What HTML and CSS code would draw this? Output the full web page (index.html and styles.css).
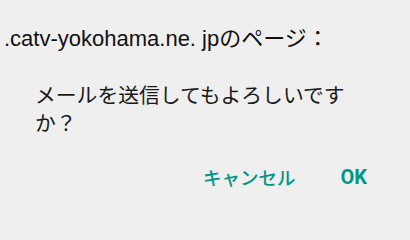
FILE: index.html
```html
<!DOCTYPE html>
<html lang="ja">
<head>
<meta charset="utf-8">
<link rel="stylesheet" href="styles.css">
</head>
<body>
<div class="dialog">
  <div class="title">.catv-yokohama.ne. jpのページ：</div>
  <div class="message">メールを送信してもよろしいですか？</div>
  <div class="actions">
    <span class="btn">キャンセル</span>
    <span class="btn ok">OK</span>
  </div>
</div>
</body>
</html>
```
FILE: styles.css
```css
html, body {
  margin: 0;
  padding: 0;
  background: #efefef;
  overflow: hidden;
}
.dialog {
  width: 410px;
  height: 218px;
  box-sizing: border-box;
  padding: 26px 0 0 4px;
  display: flex;
  flex-direction: column;
}
.title {
  font-family: "Liberation Sans", "Noto Sans CJK JP", sans-serif;
  font-size: 22px;
  line-height: 26px;
  color: #111;
  white-space: nowrap;
}
.message {
  margin-top: 28px;
  padding: 0 52px 0 31px;
  font-family: "Noto Sans CJK JP", sans-serif;
  font-size: 20.8px;
  line-height: 28px;
  color: #1a1a1a;
}
.actions {
  margin-top: 23px;
  display: flex;
  justify-content: flex-end;
  align-items: center;
  gap: 45px;
  padding-right: 43px;
  height: 36px;
}
.btn {
  font-family: "Noto Sans CJK JP", sans-serif;
  font-size: 18.5px;
  font-weight: 500;
  color: #009688;
  line-height: 36px;
}
.ok {
  font-family: Roboto, "Noto Sans", sans-serif;
  font-weight: 700;
  font-size: 20px;
}
```
